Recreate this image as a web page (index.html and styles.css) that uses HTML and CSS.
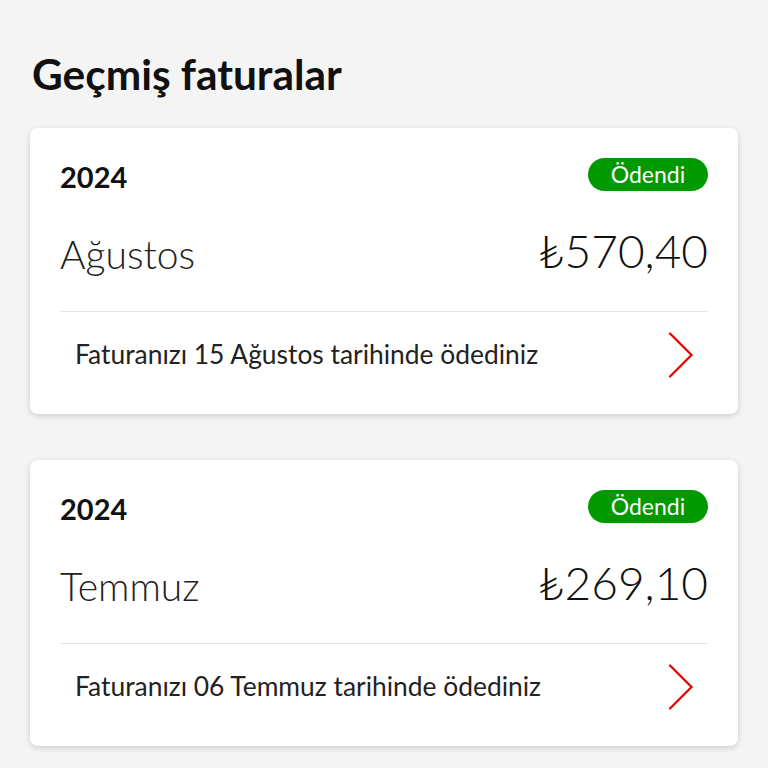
FILE: index.html
```html
<!DOCTYPE html>
<html lang="tr">
<head>
<meta charset="utf-8">
<link rel="stylesheet" href="styles.css">
</head>
<body>
<main class="page">
  <h1 class="title">Geçmiş faturalar</h1>

  <section class="card">
    <div class="card-head">
      <span class="year">2024</span>
      <span class="badge">Ödendi</span>
    </div>
    <div class="card-main">
      <span class="month">Ağustos</span>
      <span class="amount">₺570,40</span>
    </div>
    <div class="card-foot">
      <span class="note">Faturanızı 15 Ağustos tarihinde ödediniz</span>
      <svg class="chev" width="26" height="46" viewBox="0 0 26 46"><path d="M2 1.5 L23.5 23 L2 44.5" fill="none" stroke="#e60000" stroke-width="2.2" stroke-linecap="round" stroke-linejoin="miter"/></svg>
    </div>
  </section>

  <section class="card">
    <div class="card-head">
      <span class="year">2024</span>
      <span class="badge">Ödendi</span>
    </div>
    <div class="card-main">
      <span class="month">Temmuz</span>
      <span class="amount">₺269,10</span>
    </div>
    <div class="card-foot">
      <span class="note">Faturanızı 06 Temmuz tarihinde ödediniz</span>
      <svg class="chev" width="26" height="46" viewBox="0 0 26 46"><path d="M2 1.5 L23.5 23 L2 44.5" fill="none" stroke="#e60000" stroke-width="2.2" stroke-linecap="round" stroke-linejoin="miter"/></svg>
    </div>
  </section>
</main>
</body>
</html>
```

FILE: styles.css
```css
html, body {
  margin: 0;
  padding: 0;
  background: #f4f4f4;
}
body {
  font-family: "Lato", "Open Sans", sans-serif;
  color: #1a1a1a;
  width: 768px;
  height: 768px;
  overflow: hidden;
}
.page {
  padding: 0 30px;
  display: flex;
  flex-direction: column;
  gap: 46px;
}
.title {
  margin: 0 0 -18px 2px;
  padding-top: 48px;
  font-size: 42.4px;
  line-height: 52px;
  font-weight: 700;
  color: #111;
}
.card {
  background: #fff;
  border-radius: 8px;
  box-shadow: 0 2px 6px rgba(0, 0, 0, 0.16);
  padding: 30px 30px 15px;
  height: 286px;
  box-sizing: border-box;
  display: flex;
  flex-direction: column;
}
.card-head {
  display: flex;
  justify-content: space-between;
  align-items: center;
  height: 33px;
}
.year {
  font-size: 29px;
  font-weight: 700;
  color: #111;
  margin-top: 3px;
}
.badge {
  background: #009a00;
  color: #fff;
  border-radius: 17px;
  height: 33px;
  width: 120px;
  display: flex;
  align-items: center;
  justify-content: center;
  font-size: 23px;
  box-sizing: border-box;
  padding-bottom: 2px;
}
.card-main {
  display: flex;
  justify-content: space-between;
  align-items: center;
  height: 80px;
  margin-top: 20px;
  padding-bottom: 20px;
  border-bottom: 1px solid #e4e4e4;
}
.month {
  font-size: 39px;
  font-weight: 300;
  color: #222;
  margin-top: 6px;
}
.amount {
  font-size: 46px;
  font-weight: 300;
  color: #111;
}
.card-foot {
  display: flex;
  justify-content: space-between;
  align-items: center;
  height: 88px;
  padding-left: 15px;
  padding-right: 14px;
}
.note {
  font-size: 26.4px;
  color: #222;
  margin-top: -2px;
}
.chev {
  display: block;
}
```
